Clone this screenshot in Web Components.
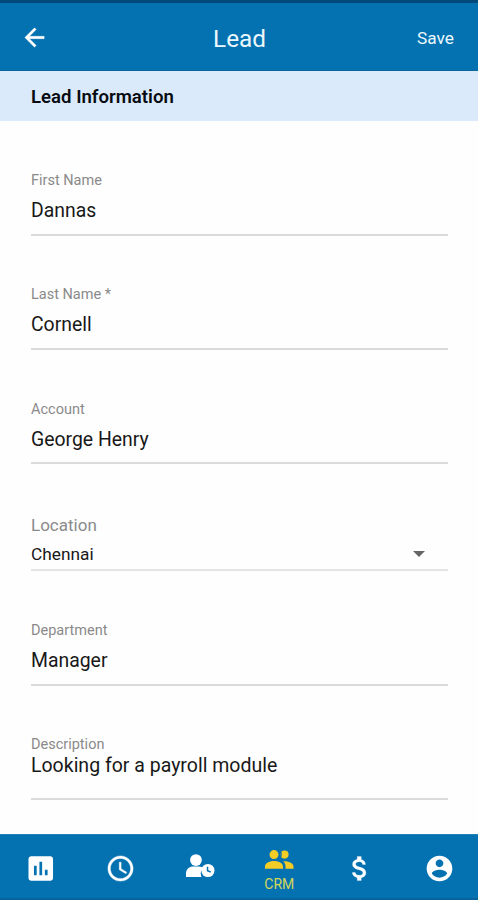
<!DOCTYPE html>
<html lang="en">
<head>
<meta charset="utf-8">
<meta name="viewport" content="width=device-width, initial-scale=1">
<title>Lead</title>
<style>
html, body { margin: 0; height: 100%; }
body { font-family: Roboto, "Liberation Sans", sans-serif; background: #fefefe; overflow: hidden; }
</style>
</head>
<body>
<lead-screen></lead-screen>
<script>
const attach = (el, html) => { el.attachShadow({ mode: 'open' }).innerHTML = html; };

const icons = {
  back: '<path d="M20 11H7.83l5.59-5.59L12 4l-8 8 8 8 1.41-1.41L7.83 13H20v-2z" stroke="currentColor" stroke-width=".3"/>',
  chart: '<path fill-rule="evenodd" d="M19 3H5c-1.1 0-2 .9-2 2v14c0 1.1.9 2 2 2h14c1.1 0 2-.9 2-2V5c0-1.1-.9-2-2-2zM9 17H7v-7h2v7zm4 0h-2V7h2v10zm4 0h-2v-4h2v4z"/>',
  clock: '<path d="M11.99 2C6.47 2 2 6.48 2 12s4.47 10 9.99 10C17.52 22 22 17.52 22 12S17.52 2 11.99 2zM12 20c-4.42 0-8-3.58-8-8s3.58-8 8-8 8 3.58 8 8-3.58 8-8 8zm.5-13H11v6l5.25 3.15.75-1.23-4.5-2.67z" stroke="currentColor" stroke-width=".3"/>',
  group: '<circle cx="9" cy="4.600" r="4.500"/><circle cx="19.500" cy="4.600" r="4.100"/><path d="M0 18.700v-2.400C0 12.800 5.400 11 9 11s9 1.800 9 5.300v2.400zM18.200 11.200c4-.3 10.300 1.500 10.300 5.100v2.400h-8v-2.500c0-2.100-.9-3.800-2.300-5z"/><path d="M14.400-.2c2.300 2.600 2.300 7 0 9.600" fill="none" stroke="#0471b1" stroke-width="1.300"/>',
  userClock: '<circle cx="10" cy="6" r="5.900"/><path d="M0 23v-3.500C0 15 3.700 12.500 7 12.500h6c1.800 0 3.400.7 4.600 1.800a7.300 7.300 0 0 0-2.100 8.700z"/><circle cx="22" cy="16.500" r="6.600"/><path d="M21.600 12.800v4l3.200 1.200" fill="none" stroke="#0471b1" stroke-width="1.500"/>',
  dollar: '<path d="M11.800 10.900c-2.270-.59-3-1.200-3-2.150 0-1.090 1.010-1.850 2.700-1.850 1.780 0 2.440.85 2.500 2.100h2.210c-.07-1.720-1.120-3.300-3.210-3.810V3h-3v2.160c-1.940.42-3.500 1.680-3.500 3.610 0 2.310 1.910 3.460 4.700 4.130 2.500.6 3 1.480 3 2.410 0 .69-.49 1.790-2.700 1.790-2.060 0-2.870-.92-2.980-2.100h-2.200c.12 2.190 1.760 3.420 3.680 3.830V21h3v-2.150c1.950-.37 3.500-1.500 3.500-3.550 0-2.840-2.430-3.810-4.700-4.400z" stroke="currentColor" stroke-width=".2"/>',
  account: '<path d="M12 2C6.480 2 2 6.480 2 12s4.480 10 10 10 10-4.480 10-10S17.520 2 12 2zm0 3c1.660 0 3 1.340 3 3s-1.340 3-3 3-3-1.340-3-3 1.340-3 3-3zm0 14.200c-2.500 0-4.710-1.280-6-3.220.03-1.990 4-3.080 6-3.080 1.990 0 5.970 1.090 6 3.080-1.290 1.940-3.500 3.220-6 3.220z"/>'
};

customElements.define('ui-icon', class extends HTMLElement {
  connectedCallback() {
    attach(this, `<style>:host{display:block;flex:none}svg{display:block;width:100%;height:100%;fill:currentColor;overflow:visible}</style>
    <svg viewBox="${this.getAttribute('box') || '0 0 24 24'}" aria-hidden="true">${icons[this.getAttribute('name')]}</svg>`);
  }
});

customElements.define('app-bar', class extends HTMLElement {
  connectedCallback() {
    attach(this, `<style>
    :host{display:grid;grid-template-columns:1fr auto 1fr;align-items:center;box-sizing:border-box;height:71px;padding:3px 24px 1px 20px;
      background:#0471b1;border-top:3px solid #004a7b;border-bottom:1px solid #0a669b;color:#edf8fd}
    ui-icon{width:29px;height:29px;color:#fff}
    .title{font-size:24.300px;line-height:30px;padding:2px 0 0 5px}
    .save{justify-self:end;font-size:17.300px;line-height:24px;padding-top:1px}
    </style><ui-icon name="back"></ui-icon><span class="title"><slot></slot></span><span class="save"><slot name="action"></slot></span>`);
  }
});

customElements.define('section-title', class extends HTMLElement {
  connectedCallback() {
    attach(this, `<style>:host{display:flex;align-items:center;box-sizing:border-box;height:50px;padding:2px 31px 0;background:#daeafb;color:#080c12;font-size:18.600px;font-weight:600}</style><slot></slot>`);
  }
});

customElements.define('form-field', class extends HTMLElement {
  connectedCallback() {
    attach(this, `<style>
    :host{display:flex;flex-direction:column;box-sizing:border-box;border-bottom:2px solid #dadada}
    .label{font-size:14.500px;line-height:18px;color:#8a8a8a}
    .value{display:flex;justify-content:space-between;align-items:center;margin-top:8.500px;font-size:19.400px;line-height:24px;color:#181818}
    :host([kind=select]) {border-color:#e4e4e4}
    :host([kind=select]) .label{font-size:17px}
    :host([kind=select]) .value{font-size:17.300px;margin-top:8px}
    :host([kind=note]) .value{font-size:19.500px;margin-top:0}
    i{display:none;width:0;height:0;border:6px solid transparent;border-top-color:#666;border-bottom:0;margin-right:23px}
    :host([kind=select]) i{display:block}
    </style><span class="label">${this.getAttribute('label')}</span><span class="value"><slot></slot><i></i></span>`);
  }
});

customElements.define('nav-item', class extends HTMLElement {
  connectedCallback() {
    attach(this, `<style>:host{display:flex;flex-direction:column;align-items:center;justify-content:center;color:#fff}
    :host([active]){color:#f3cc26}.t{font-size:14px;line-height:16px;color:#d3d85c}</style>
    <slot name="icon"></slot><span class="t"><slot></slot></span>`);
  }
});

customElements.define('bottom-nav', class extends HTMLElement {
  connectedCallback() {
    attach(this, `<style>:host{display:grid;grid-template-columns:repeat(6,1fr);box-sizing:border-box;height:66px;background:#0471b1;border-top:1px solid #2382b5;border-bottom:2px solid #07649b}</style><slot></slot>`);
  }
});

customElements.define('lead-screen', class extends HTMLElement {
  connectedCallback() {
    attach(this, `<style>
    :host{display:flex;flex-direction:column;height:900px}
    main{flex:1;display:flex;flex-direction:column;padding:51px 30px 0 31px}
    form-field:nth-child(1){height:64px}
    form-field:nth-child(2){height:64px;margin-top:50px}
    form-field:nth-child(3){height:63px;margin-top:51px}
    form-field:nth-child(4){height:55px;margin-top:52px}
    form-field:nth-child(5){height:64px;margin-top:51px}
    form-field:nth-child(6){height:64px;margin-top:50px}
    .sq{width:27px;height:27px}
    .uc{width:28.500px;height:23px;margin-top:-6px}
    .gr{width:28.500px;height:18.700px;margin:0 0 7px}
    nav-item{padding:4px 0 0 2px}
    nav-item:nth-child(4){padding:9px 0 0 1px}
    </style>
    <app-bar>Lead<span slot="action">Save</span></app-bar>
    <section-title>Lead Information</section-title>
    <main>
      <form-field label="First Name">Dannas</form-field>
      <form-field label="Last Name *">Cornell</form-field>
      <form-field label="Account">George Henry</form-field>
      <form-field label="Location" kind="select">Chennai</form-field>
      <form-field label="Department">Manager</form-field>
      <form-field label="Description" kind="note">Looking for a payroll module</form-field>
    </main>
    <bottom-nav>
      <nav-item><ui-icon slot="icon" class="sq" name="chart" box="1.900 2.100 19.800 19.800"></ui-icon></nav-item>
      <nav-item><ui-icon slot="icon" class="sq" name="clock" box="1.300 1.300 21.400 21.400"></ui-icon></nav-item>
      <nav-item><ui-icon slot="icon" class="uc" name="userClock" box="0 0 28.600 23"></ui-icon></nav-item>
      <nav-item active><ui-icon slot="icon" class="gr" name="group" box="0 0 28.500 18.700"></ui-icon>CRM</nav-item>
      <nav-item><ui-icon slot="icon" class="sq" name="dollar" box="1.600 1.900 20.200 20.200"></ui-icon></nav-item>
      <nav-item><ui-icon slot="icon" class="sq" name="account" box="1.500 1.500 21 21"></ui-icon></nav-item>
    </bottom-nav>`);
  }
});
</script>
</body>
</html>
